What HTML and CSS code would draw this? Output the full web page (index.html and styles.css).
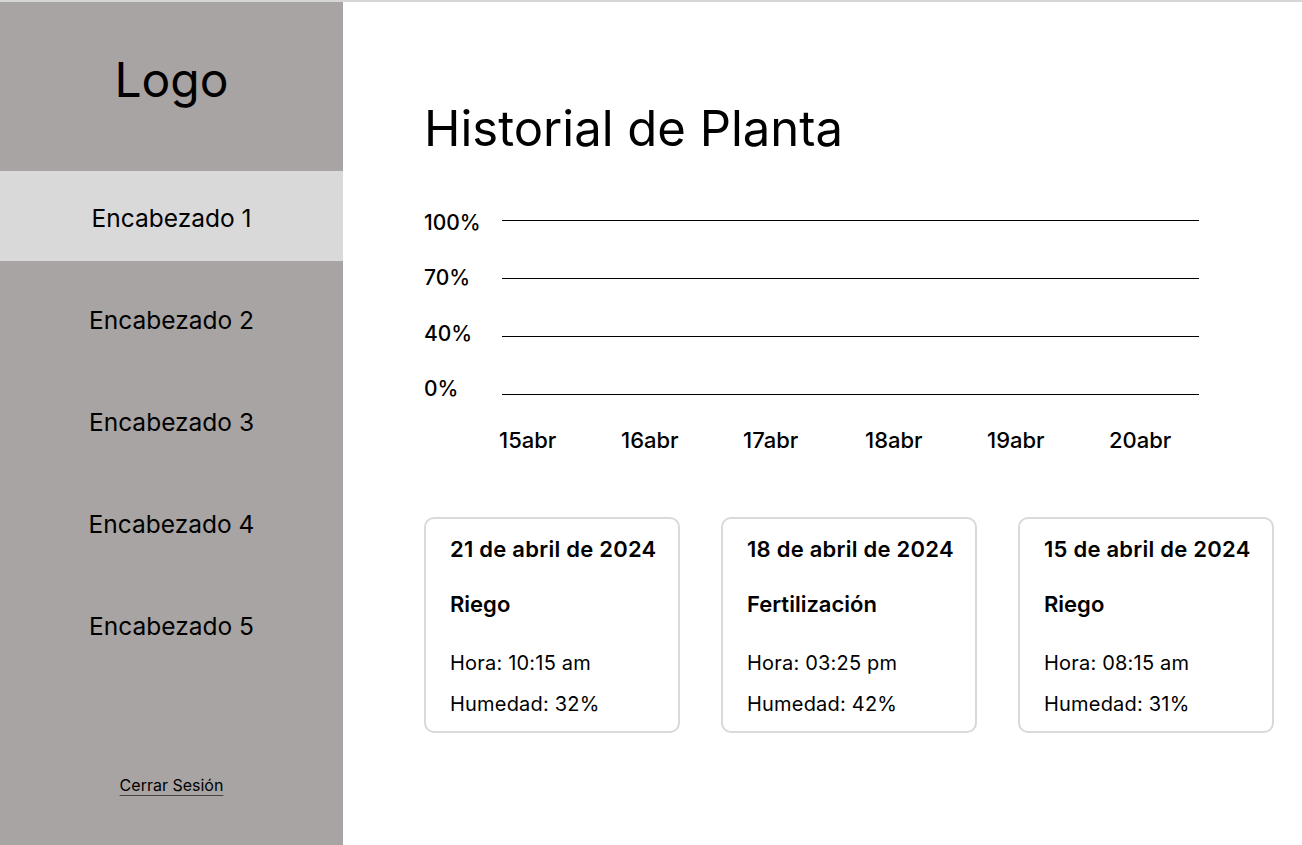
FILE: index.html
```html
<!DOCTYPE html>
<html lang="es">
<head>
<meta charset="utf-8">
<title>Historial de Planta</title>
<link rel="stylesheet" href="styles.css">
</head>
<body>
<div class="app">
  <aside class="sidebar">
    <div class="logo">Logo</div>
    <nav class="nav">
      <a class="nav-item active">Encabezado 1</a>
      <a class="nav-item">Encabezado 2</a>
      <a class="nav-item">Encabezado 3</a>
      <a class="nav-item">Encabezado 4</a>
      <a class="nav-item">Encabezado 5</a>
    </nav>
    <a class="logout">Cerrar Sesión</a>
  </aside>
  <main class="main">
    <h1 class="title">Historial de Planta</h1>
    <section class="chart">
      <div class="chart-body">
        <div class="y-labels">
          <span>100%</span>
          <span>70%</span>
          <span>40%</span>
          <span>0%</span>
        </div>
        <div class="grid-lines">
          <div class="grid-line"></div>
          <div class="grid-line"></div>
          <div class="grid-line"></div>
          <div class="grid-line"></div>
        </div>
      </div>
      <div class="x-labels">
        <span>15abr</span>
        <span>16abr</span>
        <span>17abr</span>
        <span>18abr</span>
        <span>19abr</span>
        <span>20abr</span>
      </div>
    </section>
    <section class="cards">
      <article class="card">
        <div class="card-date">21 de abril de 2024</div>
        <div class="card-type">Riego</div>
        <div class="card-line first">Hora: 10:15 am</div>
        <div class="card-line">Humedad: 32%</div>
      </article>
      <article class="card">
        <div class="card-date">18 de abril de 2024</div>
        <div class="card-type">Fertilización</div>
        <div class="card-line first">Hora: 03:25 pm</div>
        <div class="card-line">Humedad: 42%</div>
      </article>
      <article class="card">
        <div class="card-date">15 de abril de 2024</div>
        <div class="card-type">Riego</div>
        <div class="card-line first">Hora: 08:15 am</div>
        <div class="card-line">Humedad: 31%</div>
      </article>
    </section>
  </main>
</div>
</body>
</html>
```
FILE: styles.css
```css
* { box-sizing: border-box; }
html, body { margin: 0; padding: 0; }
body {
  font-family: Inter, "Noto Sans", "Liberation Sans", sans-serif;
  color: #000;
  background: #fff;
}
.app {
  display: flex;
  height: 845px;
  border-top: 2px solid #d6d6d6;
}
.sidebar {
  width: 343px;
  flex: 0 0 343px;
  background: #a8a4a3;
  display: flex;
  flex-direction: column;
  align-items: stretch;
}
.logo {
  height: 169px;
  padding-top: 49px;
  text-align: center;
  font-size: 48px;
  line-height: 58px;
}
.nav {
  display: flex;
  flex-direction: column;
  gap: 12px;
}
.nav-item {
  height: 90px;
  display: flex;
  align-items: center;
  justify-content: center;
  padding-top: 4px;
  font-size: 24.5px;
  color: #000;
}
.nav-item.active { background: #d9d9d9; }
.logout {
  margin-top: 106px;
  align-self: center;
  font-size: 16px;
  line-height: 20px;
  color: #000;
  text-decoration: underline;
  text-underline-offset: 4px;
  text-decoration-color: #444;
}
.main {
  flex: 1;
  padding: 98px 0 0 81px;
}
.title {
  margin: 0;
  font-size: 49px;
  line-height: 58px;
  font-weight: 400;
}
.chart { margin-top: 37px; }
.chart-body { display: flex; }
.y-labels {
  width: 78px;
  display: flex;
  flex-direction: column;
}
.y-labels span {
  height: 55.3px;
  line-height: 55.3px;
  font-size: 21px;
  font-weight: 500;
}
.grid-lines {
  width: 697px;
  margin-top: 25px;
  display: flex;
  flex-direction: column;
  gap: 57px;
}
.grid-line { height: 1px; background: #000; }
.x-labels {
  display: flex;
  margin-top: 12px;
  padding-left: 75px;
}
.x-labels span {
  width: 122px;
  font-size: 22px;
  line-height: 24px;
  font-weight: 500;
}
.cards {
  display: flex;
  gap: 41px;
  margin-top: 65px;
}
.card {
  width: 256px;
  height: 216px;
  border: 2px solid #d9d9d9;
  border-radius: 10px;
  padding: 17px 0 0 24px;
}
.card-date {
  font-size: 22px;
  line-height: 26px;
  font-weight: 600;
  letter-spacing: 0.25px;
}
.card-type {
  margin-top: 29px;
  font-size: 22px;
  line-height: 26px;
  font-weight: 600;
}
.card-line {
  margin-top: 17px;
  font-size: 20px;
  line-height: 24px;
  letter-spacing: 0.2px;
}
.card-line.first { margin-top: 34px; }
```
